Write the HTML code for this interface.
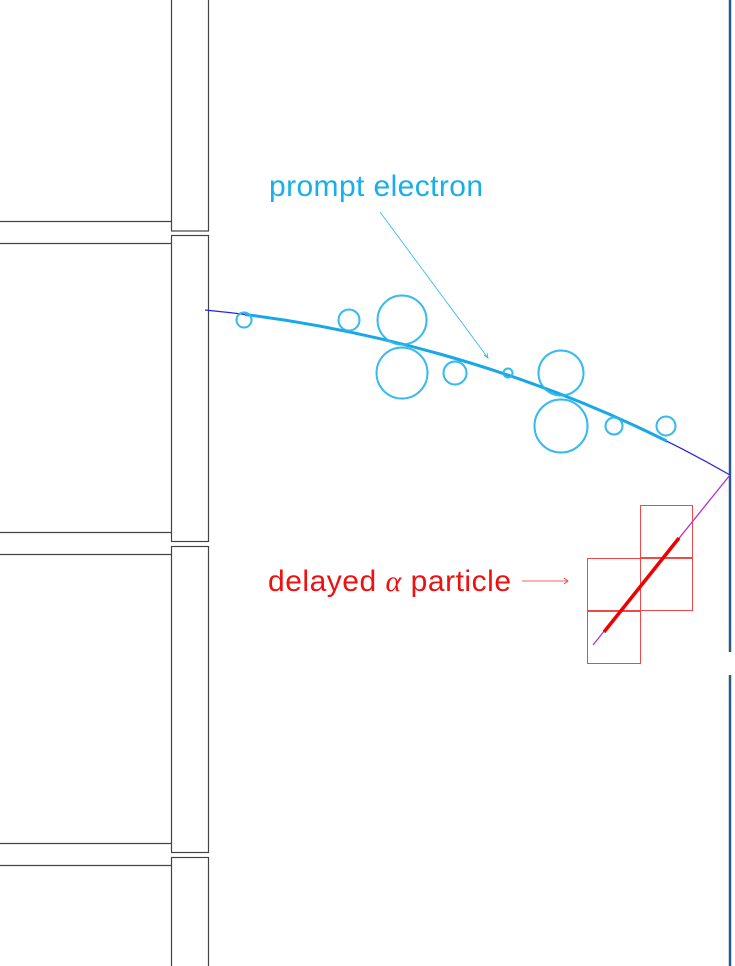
<!DOCTYPE html>
<html><head><meta charset="utf-8"><style>
html,body{margin:0;padding:0;background:#fff;width:735px;height:966px;overflow:hidden}
svg{display:block}
</style></head><body>
<svg width="735" height="966" viewBox="0 0 735 966" xmlns="http://www.w3.org/2000/svg">
<defs><clipPath id="c"><rect x="245" y="0" width="422" height="966"/></clipPath></defs>
<g fill="none" stroke="#444" stroke-width="1.2">
<rect x="171.5" y="-2" width="37" height="233"/>
<rect x="171.5" y="235.5" width="37" height="306"/>
<rect x="171.5" y="546.5" width="37" height="306"/>
<rect x="171.5" y="857.5" width="37" height="112"/>
<line x1="0" y1="221.5" x2="171" y2="221.5"/><line x1="0" y1="243.5" x2="171" y2="243.5"/>
<line x1="0" y1="532.5" x2="171" y2="532.5"/><line x1="0" y1="554.5" x2="171" y2="554.5"/>
<line x1="0" y1="843.5" x2="171" y2="843.5"/><line x1="0" y1="865.5" x2="171" y2="865.5"/>
</g>
<g stroke="#2a5a88" stroke-width="2.5">
<line x1="730" y1="0" x2="730" y2="652"/>
<line x1="730" y1="675" x2="730" y2="966"/>
</g>
<path d="M205,310 C330,322 530,360 730,475" fill="none" stroke="#2222ee" stroke-width="1.2"/>
<path d="M205,310 C330,322 530,360 730,475" fill="none" stroke="#1aa7e8" stroke-width="3" clip-path="url(#c)"/>
<g fill="none" stroke="#2bb5ee" stroke-width="1">
<circle cx="244" cy="320" r="8"/><circle cx="244" cy="320" r="7"/>
<circle cx="349" cy="320" r="11"/><circle cx="349" cy="320" r="10"/>
<circle cx="402" cy="320" r="25"/><circle cx="402" cy="320" r="24"/>
<circle cx="402" cy="373" r="26"/><circle cx="402" cy="373" r="25"/>
<circle cx="455" cy="373" r="12"/><circle cx="455" cy="373" r="11"/>
<circle cx="508" cy="373" r="5"/><circle cx="508" cy="373" r="4"/>
<circle cx="561" cy="373" r="23"/><circle cx="561" cy="373" r="22"/>
<circle cx="561" cy="426" r="27"/><circle cx="561" cy="426" r="26"/>
<circle cx="614" cy="426" r="9"/><circle cx="614" cy="426" r="8"/>
<circle cx="666" cy="426" r="10"/><circle cx="666" cy="426" r="9"/>
</g>
<line x1="380" y1="212" x2="488" y2="358" stroke="#2bb5ee" stroke-width="0.8"/>
<path d="M484,355 L488,358 L487,353" fill="none" stroke="#2bb5ee" stroke-width="0.8"/>
<text x="269" y="196" font-family="Liberation Sans, sans-serif" font-size="30" fill="#1aaee8" textLength="214" lengthAdjust="spacing">prompt electron</text>
<g fill="none" stroke="#f04848" stroke-width="1">
<rect x="640.5" y="505.5" width="52" height="52"/>
<rect x="587.5" y="558.5" width="53" height="52"/>
<rect x="640.5" y="558.5" width="52" height="52"/>
<rect x="587.5" y="611.5" width="53" height="52"/>
</g>
<line x1="593" y1="645" x2="730" y2="475" stroke="#b030d0" stroke-width="1.3"/>
<line x1="604" y1="632" x2="679" y2="538" stroke="#ee0000" stroke-width="3.5"/>
<text x="268" y="591" font-family="Liberation Sans, sans-serif" font-size="30" fill="#ee1111" textLength="243" lengthAdjust="spacing">delayed <tspan font-family="Liberation Serif, serif" font-style="italic">α</tspan> particle</text>
<line x1="522" y1="581" x2="568" y2="581" stroke="#ee3333" stroke-width="0.8"/>
<path d="M564,578 L568,581 L564,584" fill="none" stroke="#ee3333" stroke-width="0.8"/>
</svg>
</body></html>
